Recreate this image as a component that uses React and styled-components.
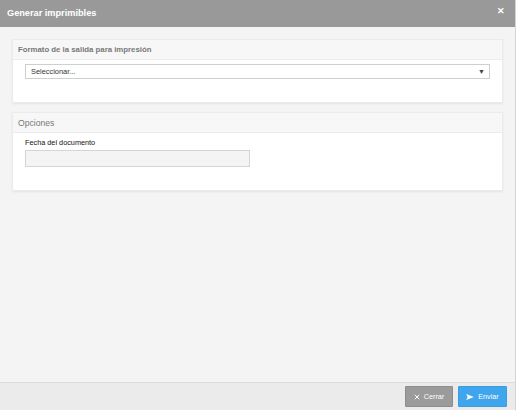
import React from 'react';
import styled, { createGlobalStyle } from 'styled-components';

const Global = createGlobalStyle`
  html, body {
    margin: 0;
    padding: 0;
    background: #f4f4f4;
  }
  * { box-sizing: border-box; }
`

const Dialog = styled.div`
  width: 516px;
  height: 410px;
  display: flex;
  flex-direction: column;
  font-family: "Liberation Sans", Arial, sans-serif;
  border-right: 1px solid #d4d4d4;
  background: #f4f4f4;
`

const TitleBar = styled.div`
  height: 27px;
  flex: none;
  background: #999999;
  display: flex;
  align-items: center;
  justify-content: space-between;
  padding: 0 10px 2px 7px;
  color: #fff;
  font-size: 9.2px;
  font-weight: bold;
`

const CloseX = styled.span`
  font-size: 9px;
  font-weight: bold;
  line-height: 1;
  margin-top: -3px;
`

const Content = styled.div`
  flex: 1;
  display: flex;
  flex-direction: column;
  gap: 9px;
  padding: 12px 12px 0 12px;
`

const Panel = styled.section`
  background: #fff;
  border: 1px solid #ebebeb;
  box-shadow: 0 1px 2px rgba(0, 0, 0, 0.07);
`

const PanelHeader = styled.div`
  height: 20px;
  background: #f7f7f7;
  border-bottom: 1px solid #ececec;
  display: flex;
  align-items: center;
  padding-left: 5px;
  color: #777;
  font-size: ${props => props.bold ? '7.8px' : '8.6px'};
  font-weight: ${props => props.bold ? 'bold' : 'normal'};
`

const PanelBody = styled.div`
  padding: ${props => props.pad};
`

const SelectBox = styled.div`
  height: 15px;
  border: 1px solid #cfcfcf;
  display: flex;
  align-items: center;
  justify-content: space-between;
  padding: 0 4px 0 5px;
  font-size: 7.4px;
  color: #333;
`

const Arrow = styled.span`
  font-size: 7px;
  color: #444;
`

const FieldLabel = styled.div`
  font-size: 7.3px;
  color: #111;
  margin-bottom: 3px;
`

const TextInput = styled.div`
  width: 225px;
  height: 17px;
  border: 1px solid #d4d4d4;
  background: #f4f4f4;
`

const Footer = styled.div`
  height: 28px;
  flex: none;
  border-top: 1px solid #dcdcdc;
  background: #ebebeb;
  display: flex;
  justify-content: flex-end;
  align-items: flex-start;
  gap: 5px;
  padding: 3px 8px 0 0;
`

const Button = styled.button`
  width: ${props => props.w}px;
  height: 21px;
  border: 1px solid ${props => props.primary ? '#3a9de0' : '#8c8c8c'};
  background: ${props => props.primary ? '#3fa6ee' : '#9b9b9b'};
  color: #fff;
  font-family: "Liberation Sans", Arial, sans-serif;
  font-size: 7.2px;
  display: flex;
  align-items: center;
  justify-content: center;
  gap: 4px;
  padding: 0;
  border-radius: 1px;
`

export default function App() {
  return (
    <>
      <Global />
      <Dialog>
        <TitleBar>
          <span>Generar imprimibles</span>
          <CloseX>✕</CloseX>
        </TitleBar>
        <Content>
          <Panel>
            <PanelHeader bold>Formato de la salida para impresión</PanelHeader>
            <PanelBody pad="4px 12px 23px 12px">
              <SelectBox>
                <span>Seleccionar...</span>
                <Arrow>▼</Arrow>
              </SelectBox>
            </PanelBody>
          </Panel>
          <Panel>
            <PanelHeader>Opciones</PanelHeader>
            <PanelBody pad="5px 12px 23px 12px">
              <FieldLabel>Fecha del documento</FieldLabel>
              <TextInput />
            </PanelBody>
          </Panel>
        </Content>
        <Footer>
          <Button w={48}>
            <svg width="6" height="6" viewBox="0 0 8 8">
              <path d="M1 1L7 7M7 1L1 7" stroke="#fff" strokeWidth="1.3" />
            </svg>
            Cerrar
          </Button>
          <Button w={49} primary>
            <svg width="8" height="6" viewBox="0 0 9 7">
              <path d="M0 0L9 3.5L0 7L1.8 3.5Z" fill="#fff" />
            </svg>
            Enviar
          </Button>
        </Footer>
      </Dialog>
    </>
  );
}
